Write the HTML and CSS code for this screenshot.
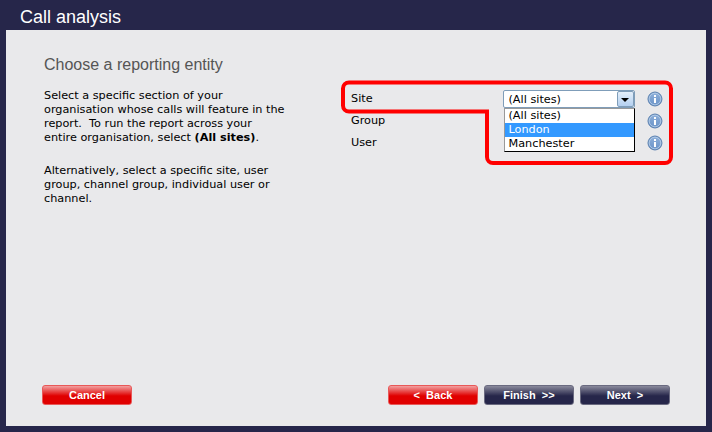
FILE: index.html
```html
<!DOCTYPE html>
<html lang="en">
<head>
    <meta charset="UTF-8">
    <meta name="viewport" content="width=device-width, initial-scale=1.0">
    <title>Call analysis</title>
    <link rel="stylesheet" href="styles.css">
</head>
<body>
    <div class="wizard">
        <h1 class="wizard-title">Call analysis</h1>
        <div class="panel">
            <h2 class="panel-heading">Choose a reporting entity</h2>
            <div class="panel-body">
                <div class="help">
                    <p>Select a specific section of your<br>organisation whose calls will feature in the<br>report.&nbsp; To run the report across your<br>entire organisation, select <b>(All sites)</b>.</p>
                    <p>Alternatively, select a specific site, user<br>group, channel group, individual user or<br>channel.</p>
                </div>
                <div class="fields">
                    <div class="field">
                        <span class="field-label">Site</span>
                        <div class="select">
                            <span class="select-value">(All sites)</span>
                            <span class="select-arrow"></span>
                            <ul class="select-list">
                                <li>(All sites)</li>
                                <li class="selected">London</li>
                                <li>Manchester</li>
                            </ul>
                        </div>
                        <svg class="info" viewBox="0 0 16 16"><use href="#info-icon"/></svg>
                    </div>
                    <div class="field">
                        <span class="field-label">Group</span>
                        <div class="select-space"></div>
                        <svg class="info" viewBox="0 0 16 16"><use href="#info-icon"/></svg>
                    </div>
                    <div class="field">
                        <span class="field-label">User</span>
                        <div class="select-space"></div>
                        <svg class="info" viewBox="0 0 16 16"><use href="#info-icon"/></svg>
                    </div>
                </div>
            </div>
            <div class="buttons">
                <button class="btn btn-red">Cancel</button>
                <div class="buttons-right">
                    <button class="btn btn-red">&lt;&nbsp; Back</button>
                    <button class="btn btn-navy">Finish &nbsp;&gt;&gt;</button>
                    <button class="btn btn-navy">Next &nbsp;&gt;</button>
                </div>
            </div>
        </div>

        <!-- Red annotation round the site row and the open list -->
        <svg class="callout" width="712" height="432" viewBox="0 0 712 432">
            <path d="M349 82.5H665a6 6 0 0 1 6 6V157a6 6 0 0 1-6 6H493a6 6 0 0 1-6-6V111.5H349a6 6 0 0 1-6-6V88.5a6 6 0 0 1 6-6Z"/>
        </svg>
    </div>

    <svg class="icon-defs" width="0" height="0">
        <defs>
            <linearGradient id="info-fill" x1="0" y1="0" x2="0" y2="1">
                <stop offset="0" stop-color="#8fb0da"/>
                <stop offset="1" stop-color="#6a93c8"/>
            </linearGradient>
            <symbol id="info-icon" viewBox="0 0 16 16">
                <circle cx="8" cy="8" r="7" fill="url(#info-fill)" stroke="#5a7fae"/>
                <circle cx="8" cy="8" r="5.8" fill="none" stroke="#b9cfe9" stroke-width="0.8"/>
                <rect x="7" y="7" width="2" height="5" fill="#fff"/>
                <rect x="7" y="4" width="2" height="2" fill="#fff"/>
            </symbol>
        </defs>
    </svg>
</body>
</html>
```

FILE: styles.css
```css
html, body {
    margin: 0;
    padding: 0;
}
body {
    background-color: #26264a;
    font-family: "DejaVu Sans", Verdana, sans-serif;
    font-size: 11.25px;
    color: #000;
}
.wizard {
    position: relative;
    width: 712px;
    height: 432px;
    display: flex;
    flex-direction: column;
    overflow: hidden;
}
.wizard-title {
    margin: 0;
    height: 30px;
    padding-left: 20px;
    font-family: "Liberation Sans", Arial, sans-serif;
    font-size: 18px;
    font-weight: normal;
    line-height: 35px;
    color: #fff;
}
.panel {
    flex: 1;
    margin: 0 6px 6px 6px;
    padding: 26px 36px 21px 36px;
    background-color: #e9e9eb;
    display: flex;
    flex-direction: column;
}
.panel-heading {
    margin: 0 0 15px 2px;
    font-family: "Liberation Sans", Arial, sans-serif;
    font-size: 16px;
    font-weight: normal;
    line-height: 18px;
    color: #555;
}
.panel-body {
    flex: 1;
    display: flex;
    justify-content: space-between;
}
.help {
    padding-left: 2px;
    line-height: 14px;
}
.help p {
    margin: 0 0 19px 0;
}
.fields {
    width: 319px;
    box-sizing: border-box;
    padding-right: 7px;
    margin-top: -2px;
    display: flex;
    flex-direction: column;
}
.field {
    height: 22px;
    display: flex;
    align-items: center;
}
.field-label {
    width: 153px;
}
.select,
.select-space {
    width: 132px;
    height: 18px;
    margin-top: 2px;
}
.select {
    position: relative;
    box-sizing: border-box;
    border: 1px solid #7f9db9;
    border-radius: 2px;
    background-color: #fff;
    display: flex;
    align-items: center;
}
.select-value {
    flex: 1;
    padding-left: 4px;
}
.select-arrow {
    position: relative;
    width: 17px;
    height: 16px;
    box-sizing: border-box;
    border: 1px solid #7f9db9;
    border-radius: 2px;
    background: linear-gradient(#e4effa, #b4d0f0);
}
.select-arrow::after {
    content: "";
    position: absolute;
    left: 3px;
    top: 6px;
    border-left: 4px solid transparent;
    border-right: 4px solid transparent;
    border-top: 4px solid #000;
}
.select-list {
    position: absolute;
    left: 0;
    top: 17px;
    width: 131px;
    box-sizing: border-box;
    margin: 0;
    padding: 0;
    list-style: none;
    background-color: #fff;
    border: 1px solid #000;
    border-left-color: #999;
    border-top-color: #999;
    z-index: 2;
}
.select-list li {
    height: 14px;
    padding-left: 3px;
    line-height: 14px;
}
.select-list .selected {
    background-color: #3399ff;
    color: #fff;
}
.info {
    width: 16px;
    height: 16px;
    margin-left: 12px;
    margin-top: 2px;
}
.icon-defs {
    position: absolute;
}
.buttons {
    display: flex;
    justify-content: space-between;
}
.buttons-right {
    display: flex;
    gap: 6px;
}
.btn {
    width: 90px;
    height: 20px;
    padding: 0;
    border: 1px solid #888;
    border-radius: 3px;
    font-family: "Liberation Sans", Arial, sans-serif;
    font-size: 11px;
    font-weight: bold;
    color: #fff;
    cursor: pointer;
}
.btn-red {
    background: linear-gradient(#f2a0a0 0, #e00000 55%, #e00000 100%);
    border-color: #e85858;
}
.btn-navy {
    background: linear-gradient(#8a8a9c 0, #26264a 55%, #26264a 100%);
    border-color: #6a6a80;
}
.callout {
    position: absolute;
    left: 0;
    top: 0;
    pointer-events: none;
    z-index: 1;
}
.callout path {
    fill: none;
    stroke: #ff0000;
    stroke-width: 4;
}
```
